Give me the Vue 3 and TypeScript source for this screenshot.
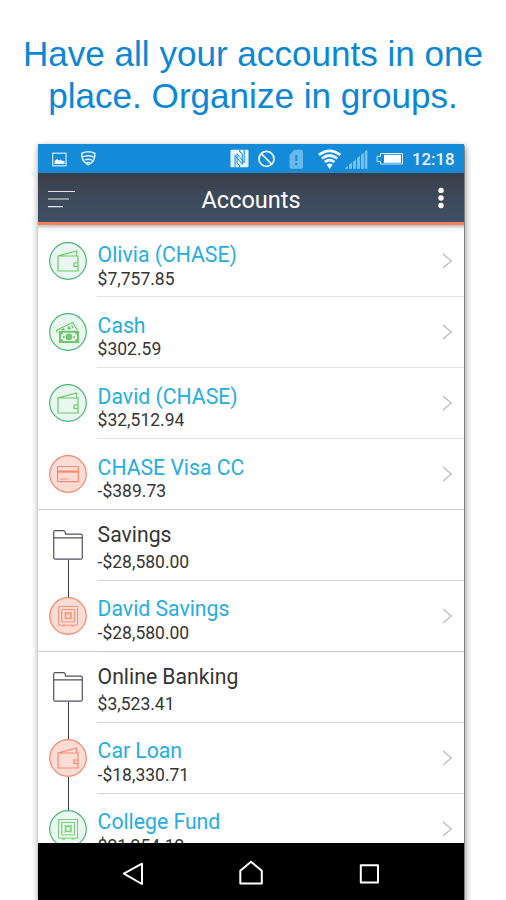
<script setup lang="ts">
type Icon = 'wallet' | 'cash' | 'card' | 'safe' | 'folder'

interface Row {
  name: string
  amount: string
  icon: Icon
  tone: 'green' | 'red' | 'group'
  divider: 'soft' | 'inset' | 'full'
  above?: boolean
  below?: boolean
}

const rows: Row[] = [
  { name: 'Olivia (CHASE)', amount: '$7,757.85', icon: 'wallet', tone: 'green', divider: 'soft' },
  { name: 'Cash', amount: '$302.59', icon: 'cash', tone: 'green', divider: 'soft' },
  { name: 'David (CHASE)', amount: '$32,512.94', icon: 'wallet', tone: 'green', divider: 'soft' },
  { name: 'CHASE Visa CC', amount: '-$389.73', icon: 'card', tone: 'red', divider: 'full' },
  { name: 'Savings', amount: '-$28,580.00', icon: 'folder', tone: 'group', divider: 'inset', below: true },
  { name: 'David Savings', amount: '-$28,580.00', icon: 'safe', tone: 'red', divider: 'full', above: true },
  { name: 'Online Banking', amount: '$3,523.41', icon: 'folder', tone: 'group', divider: 'inset', below: true },
  { name: 'Car Loan', amount: '-$18,330.71', icon: 'wallet', tone: 'red', divider: 'inset', above: true, below: true },
  { name: 'College Fund', amount: '$21,254.12', icon: 'safe', tone: 'green', divider: 'inset', above: true },
]
</script>

<template>
  <main class="page">
    <h1 class="headline">
      <span>Have all your accounts in one</span>
      <span>place. Organize in groups.</span>
    </h1>

    <section class="phone">
      <div class="status">
        <svg class="status-left" width="60" height="30" viewBox="0 0 60 30">
          <rect x="14.7" y="9.2" width="13.3" height="12.6" fill="none" stroke="#d5ecfa" stroke-width="1.2" />
          <path d="M16.5 20v-3l2.500-2 2 1.500 1.500-1 1.500 1.200 2.500.3v3z" fill="#eef8fe" />
          <g fill="none" stroke="#e3f3fc" stroke-width="1.500" stroke-linecap="round" stroke-linejoin="round">
            <path d="M43.800 9.300q6.500-3 13 0c.4 5-2 9.500-6.500 11.500-4.500-2-6.900-6.500-6.500-11.500z" />
            <path d="M45.500 12.800q4.800-2.200 9.600 0M47.200 15.900q3.100-1.400 6.200 0M49.300 18.600h2" />
          </g>
        </svg>
        <svg class="status-icons" width="178" height="30" viewBox="0 0 178 30">
          <rect x="1.500" y="5.800" width="18" height="17.400" rx="1" fill="#e8f5fd" />
          <path d="M6 23.500V11.300l7.300 9V9.700L10.800 8V5.500M15.200 5.500v13.200L8 9.800v9.600l2.600 1.900v2.200" fill="none" stroke="#148bd8" stroke-width="1" />
          <g fill="none" stroke="#e8f5fd" stroke-width="1.800">
            <circle cx="37.500" cy="14.900" r="7.500" /><path d="M32.300 9.700l10.400 10.400" />
          </g>
          <path d="M65.500 5.800h6.500q2 0 2 2v15q0 2-2 2H62.500q-2 0-2-2V11z" fill="#68b8ea" />
          <path d="M66.300 11h2v6h-2zM66.300 19h2v2.200h-2z" fill="#148bd8" />
          <g fill="none" stroke="#f2faff" stroke-width="2.700">
            <path d="M89.900 10.900q10.700-8.200 21.400 0" />
            <path d="M92.800 14.500q7.800-6 15.600 0" />
            <path d="M95.800 18q4.800-3.800 9.600 0" />
          </g>
          <path d="M97.600 20.700q3-2.500 6 0l-3 4.300z" fill="#f2faff" />
          <path d="M115.500 24.700l3.500-3v3zM120 24.700v-4l3-2.300v6.300zM124 24.700v-7l3-2.500v9.500zM128 24.700v-10.400l3-2.500v12.900zM132 24.700V11l2.800-2.400v16.100zM135.700 24.700V7.800l2.700-2v18.900z" fill="#79c0ed" />
          <path d="M151.500 9.500h22v10.500h-22v-2.500h-3.300v-5.200h3.300z" fill="none" stroke="#d5ecfa" />
          <path d="M155 10.800h17v8h-17z" fill="#fff" />
        </svg>
        <span class="clock">12:18</span>
      </div>

      <header class="bar">
        <svg class="menu" width="28" height="20" viewBox="0 0 28 20">
          <path d="M0 2.500h27M0 10h21M0 17.700h15" stroke="#e4e6ea" stroke-width="1.200" />
        </svg>
        <span class="bar-title">Accounts</span>
        <svg class="more" width="8" height="22" viewBox="0 0 8 22">
          <g fill="#fff"><circle cx="4" cy="3.400" r="2.700" /><circle cx="4" cy="11" r="2.700" /><circle cx="4" cy="18.500" r="2.700" /></g>
        </svg>
      </header>

      <div class="list">
        <article v-for="row in rows" :key="row.name" class="row" :class="[row.tone, row.divider]">
          <div class="rail">
            <i class="stem top" :class="{ on: row.above }"></i>
            <svg v-if="row.icon === 'folder'" class="folder" width="30" height="30" viewBox="0 0 30 30">
              <path d="M.7 7.800V2.200Q.7.700 2.200.7h8.300q1.500 0 1.700 1.500l.3 2h15.300q1.500 0 1.500 1.500v22q0 1.500-1.500 1.500H2.200q-1.500 0-1.500-1.500zM.7 7.800h28.600" />
            </svg>
            <svg v-else class="badge" width="38" height="38" viewBox="0 0 38 38">
              <circle cx="19" cy="19" r="18.300" class="disc" />
              <g v-if="row.icon === 'wallet'" class="lines">
                <path d="M9 14h20v15H9zM9.300 13.800L27.500 9v4.700M29 21h-4v3.300h4" />
              </g>
              <g v-else-if="row.icon === 'cash'">
                <path class="lines" d="M8.300 19.500l-.8-2.200L23.500 9.500l4.800 7.500" />
                <path class="solid" d="M11.500 16.700l3.500-1.700.8 1.500-1.500.8zM18.300 14.300l2.200-1 1.700 3-3.500.3zM23 12l1.800 2.500-1.500.8-1.300-2.500z" />
                <rect class="solid" x="10" y="17.800" width="20" height="12.200" />
                <path class="paper" d="M14 19.800h12q.3 1.800 2 2v4.200q-1.700.2-2 2H14q-.3-1.800-2-2v-4.200q1.700-.2 2-2z" />
                <circle class="solid" cx="20" cy="23.900" r="3.300" />
                <circle class="solid" cx="14.800" cy="23.900" r="1" /><circle class="solid" cx="25.200" cy="23.900" r="1" />
              </g>
              <g v-else-if="row.icon === 'card'" class="lines">
                <rect x="8.600" y="11.500" width="20.800" height="15.200" rx=".8" />
                <path class="thick" d="M8.600 16.600h20.800" />
                <path d="M11 24h8M20.500 24h1" />
              </g>
              <g v-else class="lines fine">
                <path d="M9.500 9.500h19v18.700h-19zM12.700 12.500h12.800v12.400H12.700zM16.200 15.900h6v5.800h-6z" />
                <circle cx="19.200" cy="18.800" r="2.500" />
                <path d="M15.500 15.200l1 1M22 21.600l1 1M15.500 22.600l1-1M22 16l1-1M12.700 14.500v2.500M12.700 21v2M13 29h3M22.500 29h3" />
              </g>
            </svg>
            <i class="stem bottom" :class="{ on: row.below }"></i>
          </div>
          <div class="body">
            <div class="text">
              <span class="name">{{ row.name }}</span>
              <span class="amount">{{ row.amount }}</span>
            </div>
            <svg v-if="row.tone !== 'group'" class="chevron" width="11" height="16" viewBox="0 0 11 16">
              <path d="M1 1l8.300 7L1 15" />
            </svg>
          </div>
        </article>
      </div>

      <nav class="nav">
        <svg width="426" height="57" viewBox="0 0 426 57" fill="none" stroke="#fff" stroke-width="2" stroke-linejoin="round">
          <path d="M85.800 30.700l18.200-10v20.300z" />
          <path d="M202.300 27.800L213 18.700l10.800 9.100v12.700h-21.500z" />
          <path d="M322.800 22.200h17.200v17.300h-17.200z" />
        </svg>
      </nav>
    </section>
  </main>
</template>

<style>
body {
  margin: 0;
  background: #fff;
  overflow: hidden;
}
</style>

<style scoped>
.page {
  width: 506px;
  height: 900px;
  overflow: hidden;
  background: #fff;
  display: flex;
  flex-direction: column;
  font-family: Roboto, sans-serif;
}
.headline {
  box-sizing: border-box;
  flex: none;
  height: 144px;
  margin: 0;
  padding-top: 33px;
  display: flex;
  flex-direction: column;
  align-items: center;
  font: 400 35.100px/42px "Liberation Sans", Arial, sans-serif;
  color: #0a87d6;
  white-space: nowrap;
}
.phone {
  width: 426px;
  height: 756px;
  flex: none;
  margin-left: 38px;
  display: flex;
  flex-direction: column;
  background: #fff;
  box-shadow: 0 0 1px 0.500px rgba(0, 0, 0, 0.3), 1px 3px 7px rgba(0, 0, 0, 0.5);
}
.status {
  flex: none;
  height: 29px;
  display: flex;
  align-items: center;
  background: #148bd8;
}
.status svg {
  flex: none;
}
.status-icons {
  margin-left: 131px;
}
.clock {
  margin-left: 5px;
  font-size: 16.800px;
  font-weight: 500;
  color: #f0f8fe;
}
.bar {
  box-sizing: border-box;
  flex: none;
  height: 52px;
  padding: 0 19px 0 10px;
  display: flex;
  align-items: center;
  background: linear-gradient(#383d46, #3d4959 45%, #404e66);
  border-bottom: 3px solid #fb8060;
}
.menu {
  margin-top: 3px;
}
.bar-title {
  margin: 4px 0 0 125.500px;
  font-size: 23.500px;
  line-height: 30px;
  color: #fff;
}
.more {
  margin-left: auto;
}
.list {
  flex: none;
  height: 618px;
  overflow: hidden;
  box-sizing: border-box;
  padding-top: 1.400px;
  background: linear-gradient(#bfc7ca 0, #d4d8da 2px, #f2f2f2 3px, #fff 6px);
}
.row {
  height: 70.900px;
  display: grid;
  grid-template-columns: 59px 1fr;
}
.rail {
  display: flex;
  flex-direction: column;
  align-items: center;
  padding-left: 1px;
  box-sizing: border-box;
}
.rail svg {
  flex: none;
}
.stem {
  width: 1px;
}
.stem.on {
  background: #3c3c40;
}
.stem.top {
  flex: none;
  height: 16px;
}
.group .stem.top {
  height: 20px;
}
.stem.bottom {
  flex: 1;
}
.body {
  box-sizing: border-box;
  display: flex;
  justify-content: space-between;
  padding: 0 11px 0 0.600px;
  border-bottom: 1px solid #d4d4d4;
}
.soft .body {
  border-bottom-color: #e3e3e3;
}
.full .body {
  border-bottom-color: #c9c9c9;
}
.full .rail {
  border-bottom: 1px solid #cdcdcd;
}
.text {
  display: flex;
  flex-direction: column;
  padding-top: 15.500px;
  white-space: nowrap;
}
.name {
  font-size: 21.200px;
  line-height: 26px;
  color: #25aee2;
}
.amount {
  margin-top: -0.300px;
  font-size: 17.500px;
  line-height: 22px;
  color: #353535;
}
.group .text {
  padding-top: 12.200px;
  gap: 3.300px;
}
.group .name {
  color: #353535;
}
.chevron {
  margin-top: 27px;
  fill: none;
  stroke: #bcbcbc;
  stroke-width: 1.300;
}
.folder {
  fill: none;
  stroke: #505064;
  stroke-width: 1.200;
}
.disc {
  stroke-width: 1.200;
}
.green .disc {
  fill: #eaf7f0;
  stroke: #46b876;
}
.red .disc {
  fill: #fddcd5;
  stroke: #f98569;
}
.lines {
  fill: none;
  stroke-width: 1.200;
}
.lines.fine {
  stroke-width: 0.900;
}
.green .lines {
  stroke: #6cc868;
}
.red .lines {
  stroke: #f58b70;
}
.lines .thick {
  stroke-width: 2.200;
}
.solid {
  fill: #6cc868;
}
.paper {
  fill: #eaf7f0;
}
.nav {
  flex: none;
  height: 57px;
  background: #000;
}
.nav svg {
  display: block;
}
</style>
